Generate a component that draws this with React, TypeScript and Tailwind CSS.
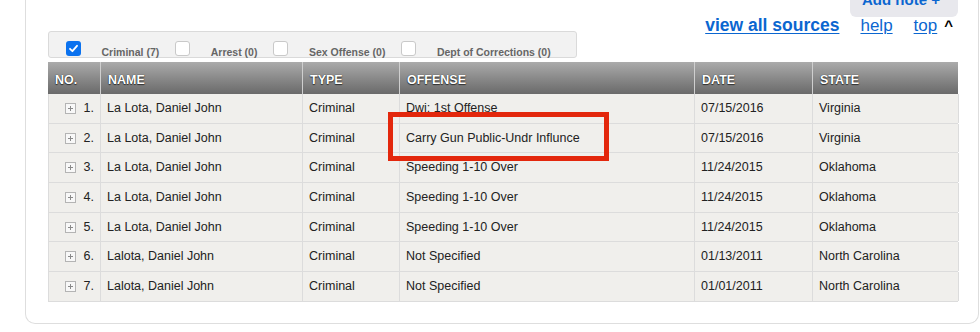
import type { ReactNode } from 'react';

type Record = {
  no: number;
  name: string;
  type: string;
  offense: string;
  date: string;
  state: string;
};

const records: Record[] = [
  { no: 1, name: 'La Lota, Daniel John', type: 'Criminal', offense: 'Dwi: 1st Offense', date: '07/15/2016', state: 'Virginia' },
  { no: 2, name: 'La Lota, Daniel John', type: 'Criminal', offense: 'Carry Gun Public-Undr Influnce', date: '07/15/2016', state: 'Virginia' },
  { no: 3, name: 'La Lota, Daniel John', type: 'Criminal', offense: 'Speeding 1-10 Over', date: '11/24/2015', state: 'Oklahoma' },
  { no: 4, name: 'La Lota, Daniel John', type: 'Criminal', offense: 'Speeding 1-10 Over', date: '11/24/2015', state: 'Oklahoma' },
  { no: 5, name: 'La Lota, Daniel John', type: 'Criminal', offense: 'Speeding 1-10 Over', date: '11/24/2015', state: 'Oklahoma' },
  { no: 6, name: 'Lalota, Daniel John', type: 'Criminal', offense: 'Not Specified', date: '01/13/2011', state: 'North Carolina' },
  { no: 7, name: 'Lalota, Daniel John', type: 'Criminal', offense: 'Not Specified', date: '01/01/2011', state: 'North Carolina' },
];

const filters = [
  { label: 'Criminal (7)', checked: true },
  { label: 'Arrest (0)', checked: false },
  { label: 'Sex Offense (0)', checked: false },
  { label: 'Dept of Corrections (0)', checked: false },
];

const cols = 'grid grid-cols-[52px_202px_97px_295px_118px_146px]';

function Checkbox({ checked }: { checked: boolean }) {
  if (checked) {
    return (
      <span className="flex h-[15px] w-[15px] shrink-0 items-center justify-center rounded-[3px] bg-[#0b72ef]">
        <svg width="11" height="11" viewBox="0 0 11 11" fill="none">
          <path d="M2 5.8 L4.4 8.2 L9 2.8" stroke="white" strokeWidth="1.8" strokeLinecap="round" strokeLinejoin="round" />
        </svg>
      </span>
    );
  }
  return <span className="block h-[15px] w-[15px] shrink-0 rounded-[3px] border border-[#c9c9c9] bg-white" />;
}

function ExpandIcon() {
  return (
    <svg width="11" height="11" viewBox="0 0 11 11" className="shrink-0">
      <rect x="0.5" y="0.5" width="10" height="10" fill="#f8f8f8" stroke="#b4b4b4" />
      <path d="M3 5.5 H8 M5.5 3 V8" stroke="#8a8a8a" strokeWidth="1" />
    </svg>
  );
}

function HeadCell({ children, first }: { children: ReactNode; first?: boolean }) {
  return (
    <div
      className={`flex items-center pt-[4px] pl-[7px] text-[12.5px] font-bold text-white [text-shadow:0_0_1px_rgba(0,0,0,0.8),0_1px_1px_rgba(0,0,0,0.6)] ${
        first ? '' : 'border-l border-[#cfcfcf]'
      }`}
    >
      {children}
    </div>
  );
}

function Cell({ children }: { children: ReactNode }) {
  return (
    <div className="flex items-center border-r border-[#dcdcdc] pl-[6px] text-[12.5px] text-[#222]">{children}</div>
  );
}

export default function App() {
  return (
    <div className="h-[332px] w-[980px] overflow-hidden bg-white font-['Liberation_Sans',Arial,sans-serif]">
      <div className="relative ml-[25px] h-[324px] w-[954px] rounded-b-[10px] border-x border-b border-[#dedede]">
        {/* note tab hanging from the top edge, label mostly scrolled off */}
        <div className="absolute right-[20px] top-0 h-[17px] w-[108px] overflow-hidden rounded-b-[6px] bg-[#e8e8ed]">
          <span className="absolute left-[12px] top-[-9px] whitespace-nowrap text-[15px] font-bold leading-[18px] text-[#0b66d0]">
            Add note +
          </span>
        </div>

        <div className="flex h-[31px] justify-end pr-[25px]">
          <div className="flex items-baseline pt-[15px] leading-[20px]">
            <a className="text-[17.5px] font-bold text-[#0b66d0] underline underline-offset-[2px]">view all sources</a>
            <a className="ml-[21px] text-[17px] text-[#0b66d0] underline underline-offset-[2px]">help</a>
            <a className="ml-[21px] text-[17px] text-[#0b66d0] underline underline-offset-[2px]">top</a>
            <span className="ml-[7px] text-[15px] font-bold text-black">^</span>
          </div>
        </div>

        <div className="ml-[22px] flex h-[27px] w-[529px] items-end rounded-[3px] border border-[#dadada] bg-[#f2f2f2] pb-[1px] pl-[17px]">
          {filters.map((f, i) => (
            <div key={f.label} className={`flex items-end ${i > 0 ? 'ml-[16px]' : ''}`}>
              <Checkbox checked={f.checked} />
              <span className="mb-[-2px] ml-[20.5px] text-[10.5px] font-bold leading-[12px] text-[#666]">{f.label}</span>
            </div>
          ))}
        </div>

        <div className="relative ml-[22px] mt-[4px] w-[910px]">
          <div className={`${cols} h-[32px] bg-gradient-to-b from-[#ababab] to-[#6a6a6a]`}>
            <HeadCell first>NO.</HeadCell>
            <HeadCell>NAME</HeadCell>
            <HeadCell>TYPE</HeadCell>
            <HeadCell>OFFENSE</HeadCell>
            <HeadCell>DATE</HeadCell>
            <HeadCell>STATE</HeadCell>
          </div>

          <div className="border-l border-[#dcdcdc] bg-[#f0efec]">
            {records.map((r) => (
              <div key={r.no} className={`${cols} h-[29.7px] border-b border-[#dcdcdc]`}>
                <div className="flex items-center justify-end gap-[8px] border-r border-[#dcdcdc] pr-[6px] text-[12.5px] text-[#222]">
                  <ExpandIcon />
                  <span>{r.no}.</span>
                </div>
                <Cell>{r.name}</Cell>
                <Cell>{r.type}</Cell>
                <Cell>{r.offense}</Cell>
                <Cell>{r.date}</Cell>
                <Cell>{r.state}</Cell>
              </div>
            ))}
          </div>

          {/* highlight around the second offense */}
          <div className="pointer-events-none absolute left-[340px] top-[50px] h-[49px] w-[221px] border-[5px] border-[#e3270c]" />
        </div>
      </div>
    </div>
  );
}
